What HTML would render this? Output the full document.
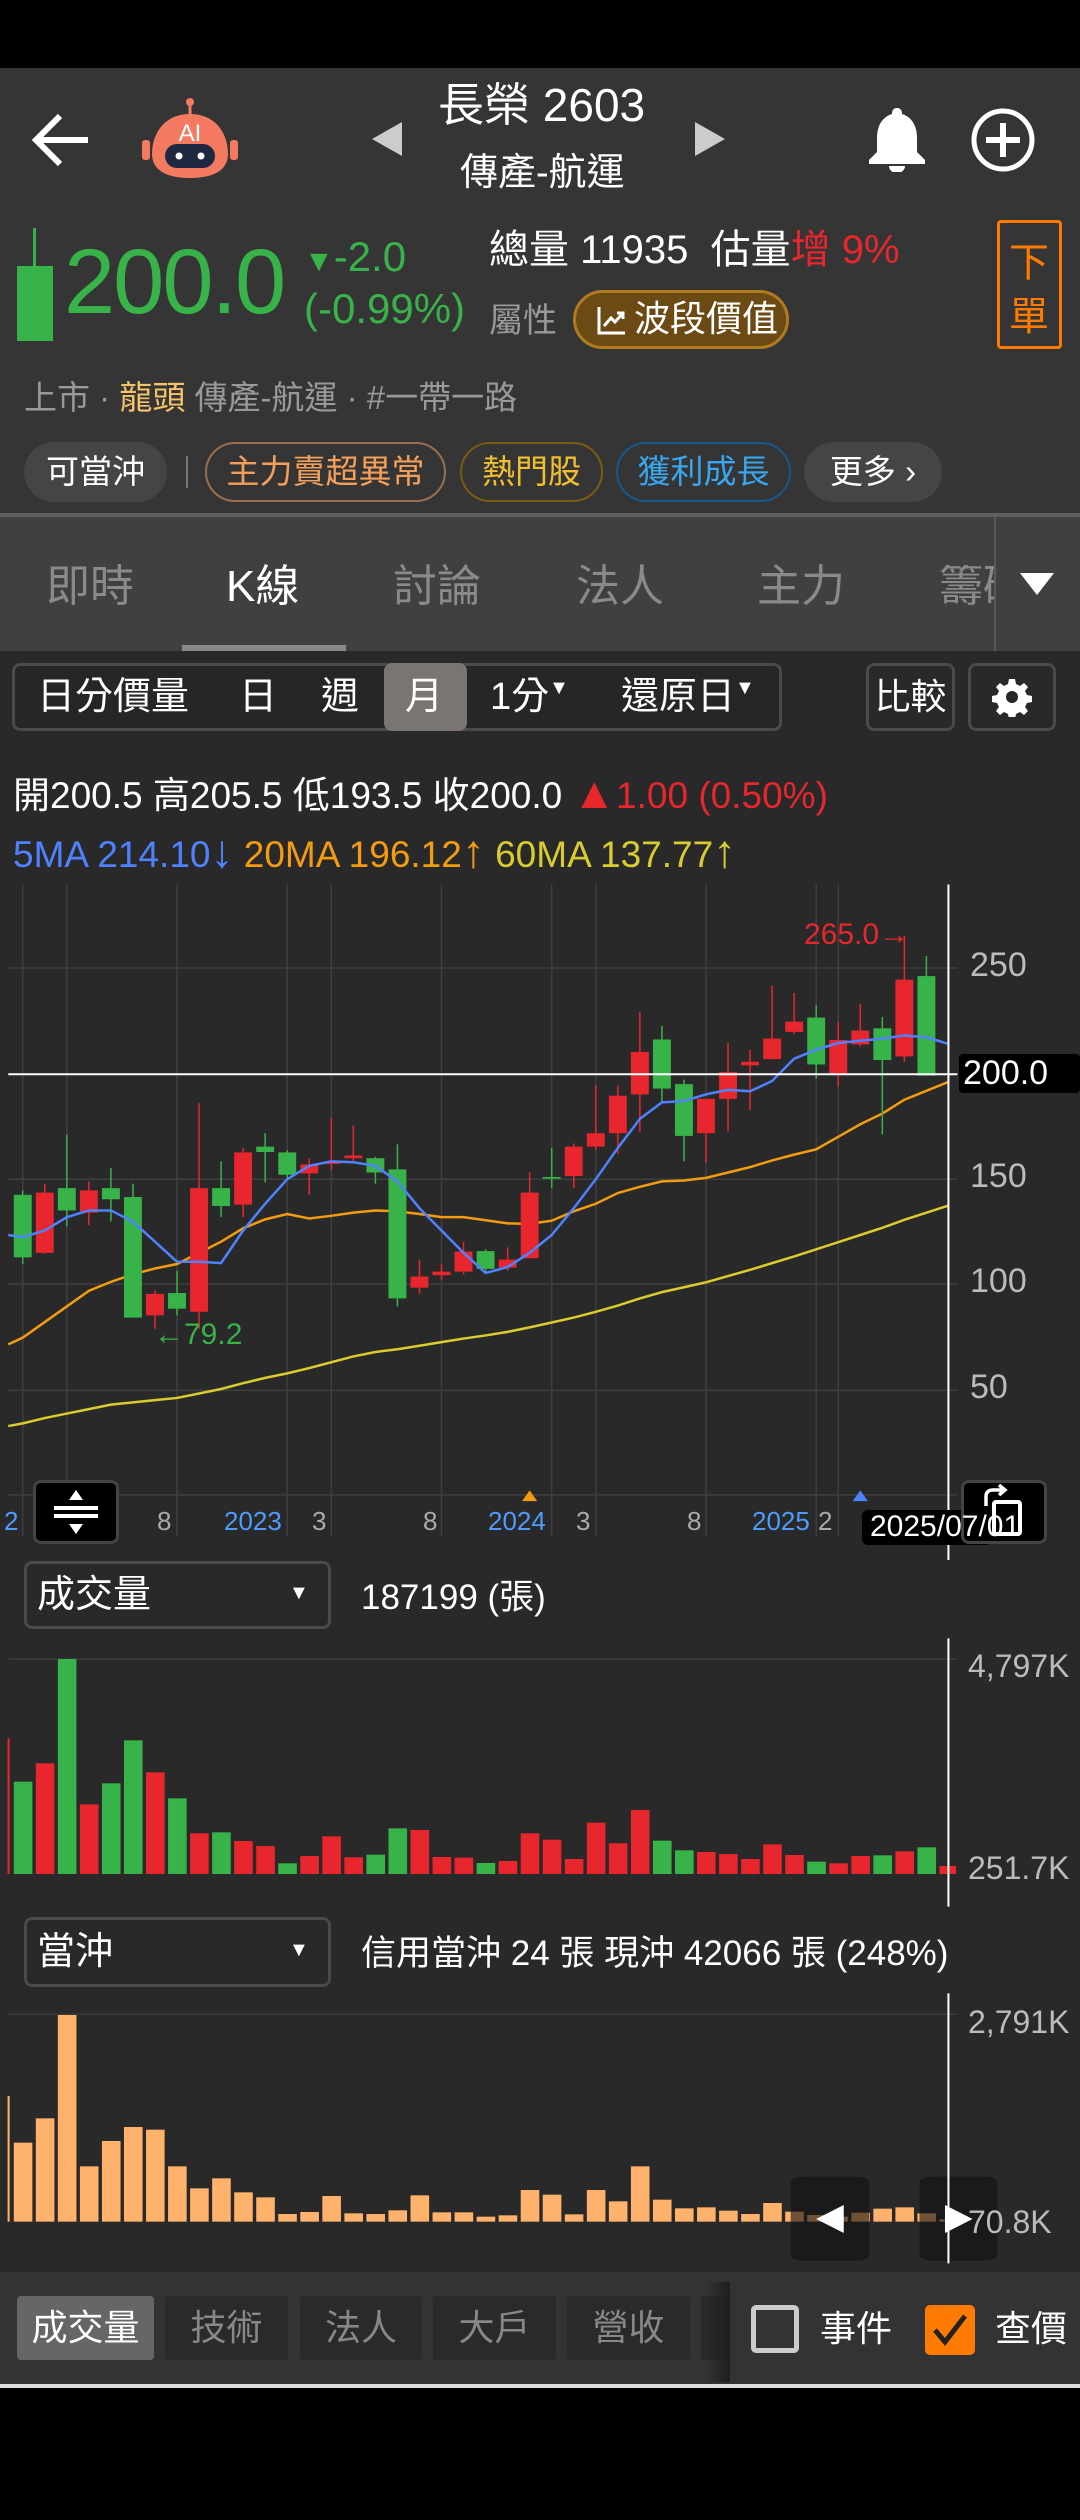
<!DOCTYPE html>
<html><head><meta charset="utf-8"><style>
*{margin:0;padding:0;box-sizing:border-box}
body{width:1080px;height:2520px;background:#000;position:relative;overflow:hidden;font-family:"Liberation Sans","Noto Sans CJK TC",sans-serif;color:#fff}
.a{position:absolute;white-space:nowrap;line-height:1}
.g{fill:#38b34a}.r{fill:#e8262e}
.lg{stroke:#38b34a}.lr{stroke:#e8262e}
svg line{vector-effect:non-scaling-stroke}
</style></head><body>
<div class="a" style="left:0;top:68px;width:1080px;height:446px;background:#353535"></div>
<svg class="a" style="left:30px;top:110px" width="64" height="60" viewBox="0 0 64 60"><path d="M58 30H8M30 6L6 30l24 24" stroke="#fff" stroke-width="6" fill="none" stroke-linejoin="miter"/></svg>
<svg class="a" style="left:140px;top:96px" width="100" height="84" viewBox="0 0 100 84">
<line x1="50" y1="6" x2="50" y2="20" stroke="#f47a62" stroke-width="3"/><circle cx="50" cy="6" r="4" fill="#f47a62"/>
<rect x="2" y="44" width="8" height="20" rx="3" fill="#f47a62"/><rect x="90" y="44" width="8" height="20" rx="3" fill="#f47a62"/>
<path d="M50 18c-26 0-38 20-38 40 0 16 14 24 38 24s38-8 38-24c0-20-12-40-38-40z" fill="#f47a62"/>
<rect x="25" y="48" width="50" height="24" rx="12" fill="#1e2840"/><circle cx="39" cy="60" r="3.5" fill="#fff"/><circle cx="61" cy="60" r="3.5" fill="#fff"/>
<text x="50" y="45" text-anchor="middle" font-size="24" fill="#fff" font-family="Liberation Sans">AI</text></svg>
<svg class="a" style="left:370px;top:122px" width="34" height="34"><path d="M32 0L2 17l30 17z" fill="#ccc"/></svg>
<svg class="a" style="left:693px;top:122px" width="34" height="34"><path d="M2 0l30 17L2 34z" fill="#ccc"/></svg>
<div class="a" style="left:438px;top:82px;font-size:46px">長榮 2603</div>
<div class="a" style="left:460px;top:154px;font-size:38px">傳產-航運</div>
<svg class="a" style="left:866px;top:106px" width="62" height="66" viewBox="0 0 62 66"><path d="M31 2c-4 0-5 3-5 6-10 3-15 12-15 24v14l-8 8v4h56v-4l-8-8V32c0-12-5-21-15-24 0-3-1-6-5-6z" fill="#fff"/><path d="M23 60a8 7 0 0016 0z" fill="#fff"/></svg>
<svg class="a" style="left:970px;top:107px" width="66" height="66" viewBox="0 0 66 66"><circle cx="33" cy="33" r="29" stroke="#fff" stroke-width="5" fill="none"/><path d="M33 16v34M16 33h34" stroke="#fff" stroke-width="6"/></svg>
<div class="a" style="left:33px;top:228px;width:3px;height:40px;background:#38b34a"></div>
<div class="a" style="left:17px;top:266px;width:36px;height:75px;background:#38b34a"></div>
<div class="a" style="left:64px;top:236px;font-size:92px;color:#38b34a;letter-spacing:-2px">200.0</div>
<div class="a" style="left:304px;top:236px;font-size:42px;color:#38b34a"><span style="font-size:30px">▼</span>-2.0</div>
<div class="a" style="left:304px;top:288px;font-size:42px;color:#38b34a">(-0.99%)</div>
<div class="a" style="left:489px;top:230px;font-size:40px">總量 11935 &nbsp;估量<span style="color:#e8262e">增 9%</span></div>
<div class="a" style="left:489px;top:304px;font-size:34px;color:#999">屬性</div>
<div class="a" style="left:573px;top:290px;width:216px;height:59px;border-radius:30px;background:#6b4a14;border:3px solid #b07a1e"></div>
<svg class="a" style="left:596px;top:304px" width="32" height="32" viewBox="0 0 32 32"><path d="M3 3v26h26" stroke="#fff" stroke-width="3" fill="none"/><path d="M8 22l7-8 4 4 8-9M21 9h6v6" stroke="#fff" stroke-width="3" fill="none"/></svg>
<div class="a" style="left:634px;top:301px;font-size:36px">波段價值</div>
<div class="a" style="left:997px;top:220px;width:65px;height:129px;border:3px solid #ff7a00;border-radius:4px"></div>
<div class="a" style="left:1009px;top:236px;font-size:40px;color:#ff7a00;line-height:54px;white-space:normal;width:42px">下單</div>
<div class="a" style="left:24px;top:381px;font-size:33px;color:#999">上市 · <span style="color:#f3c469">龍頭</span> 傳產-航運 · #一帶一路</div>
<div class="a" style="left:24px;top:442px;width:143px;height:60px;border-radius:30px;background:#454545;font-size:33px;line-height:60px;text-align:center">可當沖</div>
<div class="a" style="left:186px;top:456px;width:2px;height:32px;background:#777"></div>
<div class="a" style="left:205px;top:442px;width:241px;height:60px;border-radius:30px;border:2px solid #9a6f4f;font-size:33px;line-height:56px;text-align:center;color:#f5a05a">主力賣超異常</div>
<div class="a" style="left:460px;top:442px;width:143px;height:60px;border-radius:30px;border:2px solid #7a5c10;font-size:33px;line-height:56px;text-align:center;color:#f0c030">熱門股</div>
<div class="a" style="left:616px;top:442px;width:175px;height:60px;border-radius:30px;border:2px solid #18588a;font-size:33px;line-height:56px;text-align:center;color:#3aa6ee">獲利成長</div>
<div class="a" style="left:804px;top:442px;width:138px;height:60px;border-radius:30px;background:#454545;font-size:33px;line-height:60px;text-align:center">更多 ›</div>
<div class="a" style="left:0;top:513px;width:1080px;height:4px;background:#5e5e5e"></div>
<div class="a" style="left:0;top:517px;width:1080px;height:134px;background:#404040"></div>
<div class="a" style="left:46px;top:565px;font-size:44px;color:#8a8a8a">即時</div>
<div class="a" style="left:226px;top:565px;font-size:44px;color:#fff">K線</div>
<div class="a" style="left:393px;top:565px;font-size:44px;color:#8a8a8a">討論</div>
<div class="a" style="left:576px;top:565px;font-size:44px;color:#8a8a8a">法人</div>
<div class="a" style="left:757px;top:565px;font-size:44px;color:#8a8a8a">主力</div>
<div class="a" style="left:939px;top:565px;width:56px;overflow:hidden;font-size:44px;color:#8a8a8a">籌碼</div>
<div class="a" style="left:994px;top:517px;width:2px;height:134px;background:#5a5a5a"></div>
<svg class="a" style="left:1020px;top:573px" width="34" height="22"><path d="M0 0h34L17 22z" fill="#fff"/></svg>
<div class="a" style="left:182px;top:645px;width:164px;height:6px;background:#888"></div>
<div class="a" style="left:0;top:651px;width:1080px;height:1621px;background:#292929"></div>
<div class="a" style="left:12px;top:663px;width:770px;height:68px;border:3px solid #4a4a4a;border-radius:8px;background:#262626"></div>
<div class="a" style="left:384px;top:663px;width:83px;height:68px;background:#7a7570;border-radius:8px"></div>
<div class="a" style="left:37px;top:678px;font-size:38px">日分價量</div>
<div class="a" style="left:239px;top:678px;font-size:38px">日</div>
<div class="a" style="left:321px;top:678px;font-size:38px">週</div>
<div class="a" style="left:405px;top:678px;font-size:38px">月</div>
<div class="a" style="left:490px;top:678px;font-size:38px">1分<span style="font-size:20px;vertical-align:top">▼</span></div>
<div class="a" style="left:621px;top:678px;font-size:38px">還原日<span style="font-size:20px;vertical-align:top">▼</span></div>
<div class="a" style="left:866px;top:663px;width:89px;height:68px;border:3px solid #4a4a4a;border-radius:8px;font-size:36px;line-height:62px;text-align:center">比較</div>
<div class="a" style="left:968px;top:663px;width:88px;height:68px;border:3px solid #4a4a4a;border-radius:8px"></div>
<svg class="a" style="left:992px;top:677px" width="40" height="40" viewBox="0 0 40 40"><path d="M17 2h6l1 5 4 2 4-3 4 4-3 4 2 4 5 1v6l-5 1-2 4 3 4-4 4-4-3-4 2-1 5h-6l-1-5-4-2-4 3-4-4 3-4-2-4-5-1v-6l5-1 2-4-3-4 4-4 4 3 4-2z" fill="#fff"/><circle cx="20" cy="20" r="6" fill="#262626"/></svg>
<div class="a" style="left:13px;top:772px;font-size:37px">開200.5 高205.5 低193.5 收200.0 <span style="color:#e8262e"><span style="font-size:44px">▲</span>1.00 (0.50%)</span></div>
<div class="a" style="left:13px;top:828px;font-size:37px"><span style="color:#4f82ff">5MA 214.10<span style="font-size:46px">↓</span></span> <span style="color:#f39c12">20MA 196.12<span style="font-size:46px">↑</span></span> <span style="color:#d9cc2e">60MA 137.77<span style="font-size:46px">↑</span></span></div>
<svg class="a" style="left:0;top:860px" width="1080" height="700" viewBox="0 0 1568 1568" preserveAspectRatio="none">
<g stroke="#3f3f3f" stroke-width="1.5">
<line x1="12" y1="242" x2="1390" y2="242"/><line x1="12" y1="715" x2="1390" y2="715"/><line x1="12" y1="950" x2="1390" y2="950"/><line x1="12" y1="1188" x2="1390" y2="1188"/><line x1="12" y1="1422" x2="1390" y2="1422"/>
<line x1="33" y1="55" x2="33" y2="1515"/><line x1="97" y1="55" x2="97" y2="1515"/><line x1="257" y1="55" x2="257" y2="1515"/><line x1="417" y1="55" x2="417" y2="1515"/><line x1="481" y1="55" x2="481" y2="1515"/><line x1="641" y1="55" x2="641" y2="1515"/><line x1="801" y1="55" x2="801" y2="1515"/><line x1="865" y1="55" x2="865" y2="1515"/><line x1="1025" y1="55" x2="1025" y2="1515"/><line x1="1185" y1="55" x2="1185" y2="1515"/><line x1="1217" y1="55" x2="1217" y2="1515"/>
</g>
<polyline fill="none" stroke="#d9cc2e" stroke-width="2.5" vector-effect="non-scaling-stroke" points="12,1268 33,1262 65,1250 97,1240 129,1230 161,1220 193,1215 225,1210 257,1205 289,1195 321,1185 353,1172 385,1160 417,1150 449,1138 481,1125 513,1112 545,1102 577,1096 609,1088 641,1080 673,1072 705,1065 737,1057 769,1047 801,1036 833,1025 865,1012 897,998 929,982 961,968 993,957 1025,946 1057,932 1089,918 1121,903 1153,888 1185,872 1217,856 1249,840 1281,824 1313,806 1345,790 1377,774"/>
<polyline fill="none" stroke="#f39c12" stroke-width="2.5" vector-effect="non-scaling-stroke" points="12,1085 33,1070 65,1035 97,1000 129,965 161,945 193,928 225,915 257,905 289,880 321,855 353,825 385,805 417,793 449,803 481,797 513,790 545,785 577,787 609,793 641,800 673,800 705,807 737,814 769,815 801,808 833,787 865,770 897,746 929,732 961,720 993,718 1025,712 1057,700 1089,688 1121,673 1153,660 1185,648 1217,620 1249,592 1281,568 1313,537 1345,517 1377,497"/>
<g stroke-width="1.5">
<line class="lg" x1="33" y1="740" x2="33" y2="905"/><rect class="g" x="20" y="750" width="26" height="140"/>
<line class="lr" x1="65" y1="725" x2="65" y2="882"/><rect class="r" x="52" y="745" width="26" height="135"/>
<line class="lg" x1="97" y1="615" x2="97" y2="820"/><rect class="g" x="84" y="735" width="26" height="50"/>
<line class="lr" x1="129" y1="720" x2="129" y2="818"/><rect class="r" x="116" y="740" width="26" height="50"/>
<line class="lg" x1="161" y1="690" x2="161" y2="810"/><rect class="g" x="148" y="735" width="26" height="25"/>
<line class="lg" x1="193" y1="725" x2="193" y2="1025"/><rect class="g" x="180" y="755" width="26" height="270"/>
<line class="lr" x1="225" y1="965" x2="225" y2="1050"/><rect class="r" x="212" y="972" width="26" height="48"/>
<line class="lg" x1="257" y1="920" x2="257" y2="1020"/><rect class="g" x="244" y="970" width="26" height="35"/>
<line class="lr" x1="289" y1="545" x2="289" y2="1050"/><rect class="r" x="276" y="735" width="26" height="277"/>
<line class="lg" x1="321" y1="675" x2="321" y2="800"/><rect class="g" x="308" y="735" width="26" height="40"/>
<line class="lr" x1="353" y1="645" x2="353" y2="800"/><rect class="r" x="340" y="655" width="26" height="117"/>
<line class="lg" x1="385" y1="612" x2="385" y2="722"/><rect class="g" x="372" y="642" width="26" height="12"/>
<line class="lg" x1="417" y1="650" x2="417" y2="715"/><rect class="g" x="404" y="655" width="26" height="50"/>
<line class="lr" x1="449" y1="668" x2="449" y2="750"/><rect class="r" x="436" y="682" width="26" height="20"/>
<line class="lr" x1="481" y1="577" x2="481" y2="695"/><rect class="r" x="468" y="676" width="26" height="5"/>
<line class="lr" x1="513" y1="595" x2="513" y2="675"/><rect class="r" x="500" y="662" width="26" height="6"/>
<line class="lg" x1="545" y1="665" x2="545" y2="725"/><rect class="g" x="532" y="668" width="26" height="32"/>
<line class="lg" x1="577" y1="637" x2="577" y2="1000"/><rect class="g" x="564" y="693" width="26" height="289"/>
<line class="lr" x1="609" y1="895" x2="609" y2="972"/><rect class="r" x="596" y="933" width="26" height="25"/>
<line class="lr" x1="641" y1="905" x2="641" y2="940"/><rect class="r" x="628" y="922" width="26" height="8"/>
<line class="lr" x1="673" y1="855" x2="673" y2="928"/><rect class="r" x="660" y="877" width="26" height="45"/>
<line class="lg" x1="705" y1="872" x2="705" y2="925"/><rect class="g" x="692" y="876" width="26" height="40"/>
<line class="lr" x1="737" y1="868" x2="737" y2="920"/><rect class="r" x="724" y="895" width="26" height="18"/>
<line class="lr" x1="769" y1="700" x2="769" y2="892"/><rect class="r" x="756" y="745" width="26" height="147"/>
<line class="lg" x1="801" y1="645" x2="801" y2="735"/><rect class="g" x="788" y="710" width="26" height="4"/>
<line class="lr" x1="833" y1="635" x2="833" y2="735"/><rect class="r" x="820" y="642" width="26" height="66"/>
<line class="lr" x1="865" y1="505" x2="865" y2="650"/><rect class="r" x="852" y="612" width="26" height="30"/>
<line class="lr" x1="897" y1="505" x2="897" y2="658"/><rect class="r" x="884" y="528" width="26" height="84"/>
<line class="lr" x1="929" y1="340" x2="929" y2="610"/><rect class="r" x="916" y="430" width="26" height="95"/>
<line class="lg" x1="961" y1="372" x2="961" y2="545"/><rect class="g" x="948" y="402" width="26" height="110"/>
<line class="lg" x1="993" y1="492" x2="993" y2="675"/><rect class="g" x="980" y="502" width="26" height="116"/>
<line class="lr" x1="1025" y1="535" x2="1025" y2="678"/><rect class="r" x="1012" y="535" width="26" height="77"/>
<line class="lr" x1="1057" y1="410" x2="1057" y2="608"/><rect class="r" x="1044" y="475" width="26" height="60"/>
<line class="lr" x1="1089" y1="425" x2="1089" y2="560"/><rect class="r" x="1076" y="452" width="26" height="8"/>
<line class="lr" x1="1121" y1="282" x2="1121" y2="446"/><rect class="r" x="1108" y="400" width="26" height="46"/>
<line class="lr" x1="1153" y1="298" x2="1153" y2="390"/><rect class="r" x="1140" y="362" width="26" height="23"/>
<line class="lg" x1="1185" y1="325" x2="1185" y2="490"/><rect class="g" x="1172" y="353" width="26" height="105"/>
<line class="lr" x1="1217" y1="363" x2="1217" y2="508"/><rect class="r" x="1204" y="403" width="26" height="75"/>
<line class="lr" x1="1249" y1="322" x2="1249" y2="418"/><rect class="r" x="1236" y="382" width="26" height="31"/>
<line class="lg" x1="1281" y1="352" x2="1281" y2="615"/><rect class="g" x="1268" y="377" width="26" height="71"/>
<line class="lr" x1="1313" y1="170" x2="1313" y2="452"/><rect class="r" x="1300" y="268" width="26" height="172"/>
<line class="lg" x1="1345" y1="215" x2="1345" y2="483"/><rect class="g" x="1332" y="260" width="26" height="223"/>
</g>
<polyline fill="none" stroke="#4f82ff" stroke-width="2.5" vector-effect="non-scaling-stroke" points="12,840 33,845 65,830 97,800 129,785 161,785 193,810 225,855 257,900 289,900 321,903 353,830 385,770 417,715 449,685 481,675 513,677 545,685 577,720 609,780 641,830 673,880 705,925 737,912 769,880 801,840 833,780 865,715 897,645 929,580 961,543 993,540 1025,525 1057,515 1089,518 1121,495 1153,445 1185,425 1217,410 1249,405 1281,400 1313,393 1345,397 1377,412"/>
<line x1="12" y1="480" x2="1390" y2="480" stroke="#fff" stroke-width="2"/>
<line x1="1377" y1="55" x2="1377" y2="1568" stroke="#fff" stroke-width="2"/>
<path d="M758 1436l11-24 11 24z" fill="#f39c12"/><path d="M1238 1436l11-24 11 24z" fill="#4f82ff"/>
</svg>
<div class="a" style="left:804px;top:920px;font-size:30px;color:#e8262e">265.0→</div>
<div class="a" style="left:154px;top:1320px;font-size:30px;color:#38b34a">←79.2</div>
<div class="a" style="left:970px;top:948px;font-size:34px;color:#bbb">250</div>
<div class="a" style="left:970px;top:1159px;font-size:34px;color:#bbb">150</div>
<div class="a" style="left:970px;top:1264px;font-size:34px;color:#bbb">100</div>
<div class="a" style="left:970px;top:1370px;font-size:34px;color:#bbb">50</div>
<div class="a" style="left:959px;top:1054px;width:121px;height:39px;background:#000;border-radius:4px;font-size:34px;line-height:39px;padding-left:4px">200.0</div>
<div class="a" style="left:4px;top:1508px;font-size:26px;color:#4f9bff">2</div>
<div class="a" style="left:157px;top:1508px;font-size:26px;color:#aaa">8</div>
<div class="a" style="left:224px;top:1508px;font-size:26px;color:#4f9bff">2023</div>
<div class="a" style="left:312px;top:1508px;font-size:26px;color:#aaa">3</div>
<div class="a" style="left:423px;top:1508px;font-size:26px;color:#aaa">8</div>
<div class="a" style="left:488px;top:1508px;font-size:26px;color:#4f9bff">2024</div>
<div class="a" style="left:576px;top:1508px;font-size:26px;color:#aaa">3</div>
<div class="a" style="left:687px;top:1508px;font-size:26px;color:#aaa">8</div>
<div class="a" style="left:752px;top:1508px;font-size:26px;color:#4f9bff">2025</div>
<div class="a" style="left:818px;top:1508px;font-size:26px;color:#aaa">2</div>
<div class="a" style="left:33px;top:1480px;width:86px;height:64px;background:#000;border:3px solid #444;border-radius:8px"></div>
<svg class="a" style="left:52px;top:1488px" width="48" height="48" viewBox="0 0 48 48"><path d="M24 2l-7 10h14zM24 46l-7-10h14z" fill="#fff"/><path d="M2 20h44M2 28h44" stroke="#fff" stroke-width="4"/></svg>
<div class="a" style="left:862px;top:1510px;width:130px;height:35px;background:#000;border-radius:6px"></div>
<div class="a" style="left:961px;top:1480px;width:86px;height:64px;background:#000;border:3px solid #444;border-radius:8px"></div>
<div class="a" style="left:870px;top:1512px;font-size:30px">2025/07/01</div>
<svg class="a" style="left:980px;top:1484px" width="50" height="56" viewBox="0 0 50 56"><rect x="14" y="18" width="26" height="32" rx="2" stroke="#fff" stroke-width="4" fill="none"/><path d="M6 22V12c0-4 3-6 7-6h10M19 1l6 5-6 5" stroke="#fff" stroke-width="3.5" fill="none"/></svg>
<div class="a" style="left:24px;top:1561px;width:307px;height:68px;border:3px solid #4a4a4a;border-radius:8px"></div>
<div class="a" style="left:37px;top:1576px;font-size:38px">成交量</div>
<div class="a" style="left:289px;top:1583px;font-size:20px">▼</div>
<div class="a" style="left:361px;top:1580px;font-size:35px">187199 (張)</div>
<svg class="a" style="left:0;top:1550px" width="1080" height="420" viewBox="0 0 1568 1260" preserveAspectRatio="none">
<line x1="12" y1="327" x2="1390" y2="327" stroke="#3b3b3b" stroke-width="1.5"/>
<rect class="r" x="11" y="565" width="3" height="407"/>
<g>
<rect class="g" x="20" y="695" width="27" height="277"/><rect class="r" x="52" y="640" width="27" height="332"/><rect class="g" x="84" y="327" width="27" height="645"/><rect class="r" x="116" y="763" width="27" height="209"/><rect class="g" x="148" y="700" width="27" height="272"/><rect class="g" x="180" y="571" width="27" height="401"/><rect class="r" x="212" y="667" width="27" height="305"/><rect class="g" x="244" y="745" width="27" height="227"/><rect class="r" x="276" y="850" width="27" height="122"/><rect class="g" x="308" y="847" width="27" height="125"/><rect class="r" x="340" y="873" width="27" height="99"/><rect class="r" x="372" y="888" width="27" height="84"/><rect class="g" x="404" y="940" width="27" height="32"/><rect class="r" x="436" y="918" width="27" height="54"/><rect class="r" x="468" y="859" width="27" height="113"/><rect class="r" x="500" y="922" width="27" height="50"/><rect class="g" x="532" y="914" width="27" height="58"/><rect class="g" x="564" y="835" width="27" height="137"/><rect class="r" x="596" y="840" width="27" height="132"/><rect class="r" x="628" y="921" width="27" height="51"/><rect class="r" x="660" y="923" width="27" height="49"/><rect class="g" x="692" y="939" width="27" height="33"/><rect class="r" x="724" y="933" width="27" height="39"/><rect class="r" x="756" y="850" width="27" height="122"/><rect class="r" x="788" y="869" width="27" height="103"/><rect class="r" x="820" y="927" width="27" height="45"/><rect class="r" x="852" y="818" width="27" height="154"/><rect class="r" x="884" y="880" width="27" height="92"/><rect class="r" x="916" y="780" width="27" height="192"/><rect class="g" x="948" y="872" width="27" height="100"/><rect class="g" x="980" y="901" width="27" height="71"/><rect class="r" x="1012" y="906" width="27" height="66"/><rect class="r" x="1044" y="912" width="27" height="60"/><rect class="r" x="1076" y="927" width="27" height="45"/><rect class="r" x="1108" y="883" width="27" height="89"/><rect class="r" x="1140" y="915" width="27" height="57"/><rect class="g" x="1172" y="935" width="27" height="37"/><rect class="r" x="1204" y="940" width="27" height="32"/><rect class="r" x="1236" y="918" width="27" height="54"/><rect class="g" x="1268" y="916" width="27" height="56"/><rect class="r" x="1300" y="904" width="27" height="68"/><rect class="g" x="1332" y="892" width="27" height="80"/><rect class="r" x="1364" y="948" width="24" height="24"/>
</g>
<line x1="1377" y1="265" x2="1377" y2="1070" stroke="#fff" stroke-width="2"/>
</svg>
<div class="a" style="left:968px;top:1650px;font-size:32px;color:#bbb">4,797K</div>
<div class="a" style="left:968px;top:1852px;font-size:32px;color:#bbb">251.7K</div>
<div class="a" style="left:24px;top:1917px;width:307px;height:70px;border:3px solid #4a4a4a;border-radius:8px"></div>
<div class="a" style="left:37px;top:1933px;font-size:38px">當沖</div>
<div class="a" style="left:289px;top:1940px;font-size:20px">▼</div>
<div class="a" style="left:361px;top:1936px;font-size:35px">信用當沖 24 張 現沖 42066 張 (248%)</div>
<svg class="a" style="left:0;top:1960px" width="1080" height="440" viewBox="0 0 1568 1320" preserveAspectRatio="none">
<line x1="12" y1="163" x2="1390" y2="163" stroke="#3b3b3b" stroke-width="1.5"/>
<g fill="#ffb26b">
<rect x="11" y="408" width="3" height="377"/>
<rect x="20" y="548" width="27" height="237"/><rect x="52" y="475" width="27" height="310"/><rect x="84" y="165" width="27" height="620"/><rect x="116" y="619" width="27" height="166"/><rect x="148" y="543" width="27" height="242"/><rect x="180" y="501" width="27" height="284"/><rect x="212" y="509" width="27" height="276"/><rect x="244" y="619" width="27" height="166"/><rect x="276" y="685" width="27" height="100"/><rect x="308" y="655" width="27" height="130"/><rect x="340" y="697" width="27" height="88"/><rect x="372" y="712" width="27" height="73"/><rect x="404" y="762" width="27" height="23"/><rect x="436" y="756" width="27" height="29"/><rect x="468" y="708" width="27" height="77"/><rect x="500" y="760" width="27" height="25"/><rect x="532" y="762" width="27" height="23"/><rect x="564" y="751" width="27" height="34"/><rect x="596" y="706" width="27" height="79"/><rect x="628" y="757" width="27" height="28"/><rect x="660" y="757" width="27" height="28"/><rect x="692" y="770" width="27" height="15"/><rect x="724" y="766" width="27" height="19"/><rect x="756" y="690" width="27" height="95"/><rect x="788" y="704" width="27" height="81"/><rect x="820" y="763" width="27" height="22"/><rect x="852" y="690" width="27" height="95"/><rect x="884" y="724" width="27" height="61"/><rect x="916" y="619" width="27" height="166"/><rect x="948" y="719" width="27" height="66"/><rect x="980" y="745" width="27" height="40"/><rect x="1012" y="742" width="27" height="43"/><rect x="1044" y="752" width="27" height="33"/><rect x="1076" y="762" width="27" height="23"/><rect x="1108" y="729" width="27" height="56"/><rect x="1140" y="755" width="27" height="30"/><rect x="1172" y="765" width="27" height="20"/><rect x="1204" y="770" width="27" height="15"/><rect x="1236" y="758" width="27" height="27"/><rect x="1268" y="746" width="27" height="39"/><rect x="1300" y="742" width="27" height="43"/><rect x="1332" y="760" width="27" height="25"/><rect x="1364" y="778" width="24" height="7"/>
</g>
<rect x="1148" y="650" width="114" height="252" rx="18" fill="#111" fill-opacity="0.6"/>
<rect x="1335" y="650" width="113" height="252" rx="18" fill="#111" fill-opacity="0.6"/>
<path d="M1225 735l-40 42 40 42z" fill="#fff"/><path d="M1372 735l40 42-40 42z" fill="#fff"/>
<line x1="1377" y1="100" x2="1377" y2="910" stroke="#fff" stroke-width="2"/>
</svg>
<div class="a" style="left:968px;top:2006px;font-size:32px;color:#bbb">2,791K</div>
<div class="a" style="left:968px;top:2206px;font-size:32px;color:#bbb">70.8K</div>
<div class="a" style="left:0;top:2272px;width:1080px;height:114px;background:#333"></div>
<div class="a" style="left:17px;top:2296px;width:137px;height:64px;background:#666;border-radius:4px;font-size:36px;line-height:64px;text-align:center">成交量</div>
<div class="a" style="left:165px;top:2296px;width:123px;height:64px;background:#2a2a2a;border-radius:4px;font-size:36px;line-height:64px;text-align:center;color:#888">技術</div>
<div class="a" style="left:300px;top:2296px;width:122px;height:64px;background:#2a2a2a;border-radius:4px;font-size:36px;line-height:64px;text-align:center;color:#888">法人</div>
<div class="a" style="left:433px;top:2296px;width:123px;height:64px;background:#2a2a2a;border-radius:4px;font-size:36px;line-height:64px;text-align:center;color:#888">大戶</div>
<div class="a" style="left:567px;top:2296px;width:123px;height:64px;background:#2a2a2a;border-radius:4px;font-size:36px;line-height:64px;text-align:center;color:#888">營收</div>
<div class="a" style="left:701px;top:2296px;width:29px;height:64px;background:#2a2a2a"></div>
<div class="a" style="left:706px;top:2282px;width:24px;height:100px;background:linear-gradient(90deg,rgba(30,30,30,0),#1e1e1e)"></div>
<div class="a" style="left:751px;top:2305px;width:48px;height:48px;border:5px solid #ccc;border-radius:5px"></div>
<div class="a" style="left:820px;top:2311px;font-size:36px">事件</div>
<div class="a" style="left:925px;top:2305px;width:50px;height:50px;background:#ff7a00;border-radius:5px"></div>
<svg class="a" style="left:930px;top:2312px" width="40" height="36"><path d="M5 18l10 12L35 4" stroke="#222" stroke-width="5" fill="none"/></svg>
<div class="a" style="left:995px;top:2311px;font-size:36px">查價</div>
<div class="a" style="left:0;top:2384px;width:1080px;height:4px;background:#ddd"></div>
</body></html>
